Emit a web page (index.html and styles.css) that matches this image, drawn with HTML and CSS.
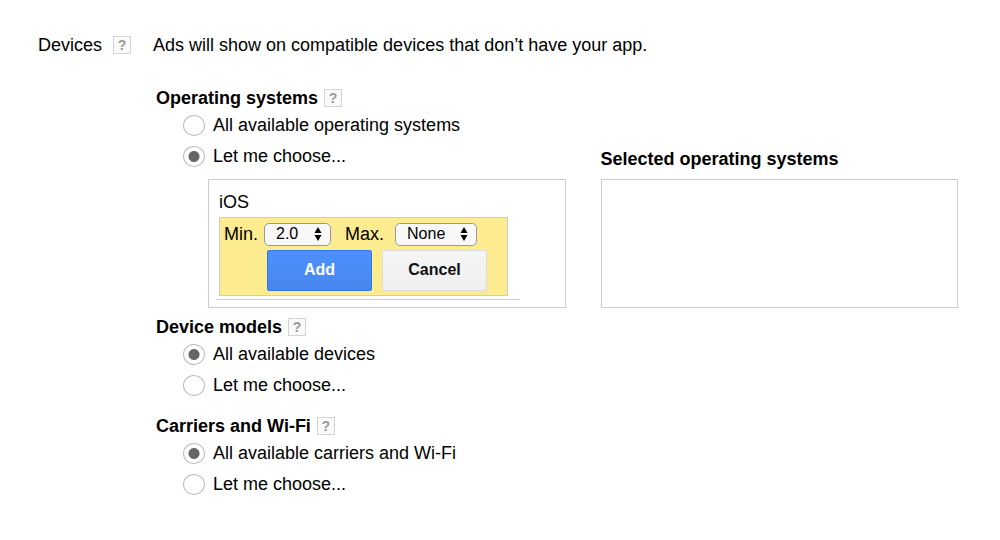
FILE: index.html
```html
<!DOCTYPE html>
<html lang="en">
<head>
<meta charset="utf-8">
<meta name="viewport" content="width=device-width, initial-scale=1">
<title>Devices</title>
<link rel="stylesheet" href="styles.css">
</head>
<body>
<main class="setting">
  <div class="setting-label">Devices <button type="button" class="help" aria-label="Help: Devices">?</button></div>
  <div class="setting-body">
    <p class="intro">Ads will show on compatible devices that don’t have your app.</p>

    <section class="group" role="radiogroup" aria-labelledby="os-title">
      <h2 class="title"><span id="os-title">Operating systems</span> <button type="button" class="help" aria-label="Help: Operating systems">?</button></h2>
      <div class="options">
        <label class="option"><input type="radio" name="os" class="radio">All available operating systems</label>
        <div class="chooser">
          <label class="option chooser-option"><input type="radio" name="os" class="radio" checked>Let me choose...</label>
          <h3 class="selected-title">Selected operating systems</h3>
          <div class="panel available">
            <div class="platform">
              <div class="platform-name">iOS</div>
              <form class="range">
                <div class="range-fields">
                  <label for="min">Min.</label>
                  <span class="picker">
                    <select id="min" class="select select-min"><option>2.0</option></select>
                    <svg class="arrows" viewBox="0 0 8 14" aria-hidden="true"><path d="M4 0 7.5 6H.5ZM4 14 .5 8H7.5Z"/></svg>
                  </span>
                  <label for="max" class="max-label">Max.</label>
                  <span class="picker picker-max">
                    <select id="max" class="select select-max"><option>None</option></select>
                    <svg class="arrows" viewBox="0 0 8 14" aria-hidden="true"><path d="M4 0 7.5 6H.5ZM4 14 .5 8H7.5Z"/></svg>
                  </span>
                </div>
                <div class="range-actions">
                  <button type="button" class="button primary">Add</button>
                  <button type="button" class="button">Cancel</button>
                </div>
              </form>
            </div>
          </div>
          <div class="panel selected"></div>
        </div>
      </div>
    </section>

    <section class="group" role="radiogroup" aria-labelledby="models-title">
      <h2 class="title"><span id="models-title">Device models</span> <button type="button" class="help" aria-label="Help: Device models">?</button></h2>
      <div class="options">
        <label class="option"><input type="radio" name="models" class="radio" checked>All available devices</label>
        <label class="option"><input type="radio" name="models" class="radio">Let me choose...</label>
      </div>
    </section>

    <section class="group spaced" role="radiogroup" aria-labelledby="carriers-title">
      <h2 class="title"><span id="carriers-title">Carriers and Wi-Fi</span> <button type="button" class="help" aria-label="Help: Carriers and Wi-Fi">?</button></h2>
      <div class="options">
        <label class="option"><input type="radio" name="carriers" class="radio" checked>All available carriers and Wi-Fi</label>
        <label class="option"><input type="radio" name="carriers" class="radio">Let me choose...</label>
      </div>
    </section>
  </div>
</main>
</body>
</html>
```

FILE: styles.css
```css
* {
  box-sizing: border-box;
}

body {
  margin: 0;
  background: #fff;
  color: #000;
  font: 18px/24px "Liberation Sans", Arial, sans-serif;
}

.setting {
  display: grid;
  grid-template-columns: 115px minmax(0, 1fr);
  padding: 33px 42px 33px 38px;
}

.setting-label {
  display: flex;
  align-items: center;
  align-self: start;
  gap: 11px;
}

.help {
  width: 18px;
  height: 18px;
  padding: 0;
  border: 1px solid #d4d4d4;
  background: #fafafa;
  color: #999;
  font: bold 14px/16px "Liberation Sans", Arial, sans-serif;
  text-align: center;
}

.intro {
  margin: 0 0 29px;
}

.group {
  margin-left: 3px;
}

.spaced {
  margin-top: 14px;
}

.title,
.selected-title {
  margin: 0;
  font-size: 18px;
  font-weight: bold;
}

.title {
  display: flex;
  align-items: center;
  gap: 6px;
}

.options {
  display: grid;
  gap: 1px;
  padding-left: 27px;
}

.option {
  display: flex;
  align-items: center;
  gap: 8px;
  height: 30px;
}

.radio {
  appearance: none;
  flex: none;
  width: 22px;
  height: 21px;
  margin: 0;
  border: 1px solid #bdbdbd;
  border-radius: 50%;
  background: #fff;
}

.radio:checked {
  background: radial-gradient(circle, #666 5px, transparent 6px);
}

.chooser {
  display: grid;
  grid-template-columns: 25px minmax(0, 1fr) 35px minmax(0, 1fr);
  margin-bottom: 7px;
}

.chooser-option {
  grid-column: 1 / 3;
}

.selected-title {
  grid-column: 4;
  align-self: end;
}

.panel {
  min-height: 129px;
  margin-top: 8px;
  border: 1px solid #ccc;
}

.available {
  grid-column: 2;
  padding: 10px 7px 7px;
}

.selected {
  grid-column: 4;
}

.platform {
  width: 304px;
  padding: 0 12px 3px 3px;
  border-bottom: 1px solid #ccc;
}

.platform-name {
  margin-bottom: 3px;
}

.range {
  padding: 4px;
  border: 1px solid #ccc;
  background: #fdeb8f;
}

.range-fields {
  display: flex;
  align-items: center;
  gap: 6px;
}

.max-label {
  margin-left: 8px;
}

.picker {
  position: relative;
  display: flex;
}

.picker-max {
  margin-left: 5px;
}

.select {
  appearance: none;
  height: 23px;
  padding: 0 11px;
  border: 1px solid #999;
  border-radius: 5px;
  background: #f8f8f8;
  color: #000;
  font: 16px/20px "Liberation Sans", Arial, sans-serif;
}

.select-min {
  width: 67px;
}

.select-max {
  width: 82px;
}

.arrows {
  position: absolute;
  top: 4px;
  right: 9px;
  width: 8px;
  height: 14px;
  pointer-events: none;
}

.range-actions {
  display: flex;
  gap: 10px;
  margin-top: 4px;
  padding-left: 43px;
}

.button {
  width: 105px;
  height: 41px;
  padding: 0 0 2px;
  border: 1px solid #dcdcdc;
  border-radius: 2px;
  background: linear-gradient(#f5f5f5, #f0f0f0);
  color: #111;
  font: bold 16px/20px "Liberation Sans", Arial, sans-serif;
}

.primary {
  border-color: #3079ed;
  background: linear-gradient(#4d90fe, #4787ed);
  color: #fff;
}
```
